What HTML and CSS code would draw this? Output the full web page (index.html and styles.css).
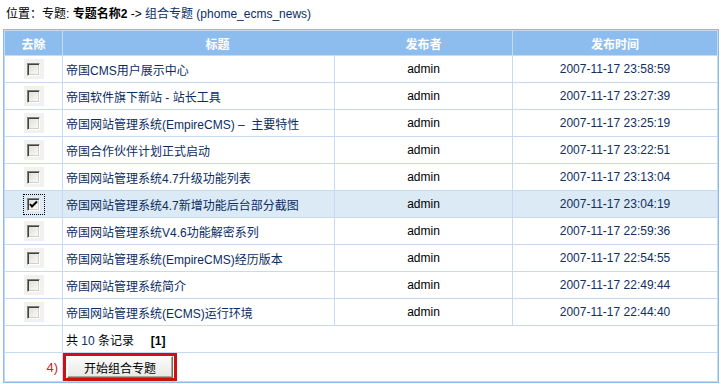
FILE: index.html
```html
<!DOCTYPE html>
<html lang="zh-CN">
<head>
    <meta charset="UTF-8">
    <title>组合专题</title>
    <link rel="stylesheet" href="styles.css">
</head>
<body>

    <div class="position">
        位置：专题: <b>专题名称2</b> -&gt; <a href="#">组合专题 (phome_ecms_news)</a>
    </div>

    <table class="tableborder">
        <colgroup>
            <col class="col-del">
            <col class="col-title">
            <col class="col-user">
            <col class="col-time">
        </colgroup>
        <tr class="header">
            <th>去除</th>
            <th class="th-title">标题</th>
            <th>发布者</th>
            <th>发布时间</th>
        </tr>
        <tr>
            <td class="del"><span class="cb-wrap"><span class="cb"></span></span></td>
            <td><a href="#">帝国CMS用户展示中心</a></td>
            <td class="user">admin</td>
            <td class="time">2007-11-17 23:58:59</td>
        </tr>
        <tr>
            <td class="del"><span class="cb-wrap"><span class="cb"></span></span></td>
            <td><a href="#">帝国软件旗下新站 - 站长工具</a></td>
            <td class="user">admin</td>
            <td class="time">2007-11-17 23:27:39</td>
        </tr>
        <tr>
            <td class="del"><span class="cb-wrap"><span class="cb"></span></span></td>
            <td><a href="#">帝国网站管理系统(EmpireCMS) – &nbsp;主要特性</a></td>
            <td class="user">admin</td>
            <td class="time">2007-11-17 23:25:19</td>
        </tr>
        <tr>
            <td class="del"><span class="cb-wrap"><span class="cb"></span></span></td>
            <td><a href="#">帝国合作伙伴计划正式启动</a></td>
            <td class="user">admin</td>
            <td class="time">2007-11-17 23:22:51</td>
        </tr>
        <tr>
            <td class="del"><span class="cb-wrap"><span class="cb"></span></span></td>
            <td><a href="#">帝国网站管理系统4.7升级功能列表</a></td>
            <td class="user">admin</td>
            <td class="time">2007-11-17 23:13:04</td>
        </tr>
        <tr class="selected">
            <td class="del">
                <span class="cb-wrap focus">
                    <span class="cb">
                        <svg width="11" height="11" viewBox="0 0 11 11"><path d="M2 5 L4 7.5 L9 2.5" fill="none" stroke="#000" stroke-width="2"/></svg>
                    </span>
                </span>
            </td>
            <td><a href="#">帝国网站管理系统4.7新增功能后台部分截图</a></td>
            <td class="user">admin</td>
            <td class="time">2007-11-17 23:04:19</td>
        </tr>
        <tr>
            <td class="del"><span class="cb-wrap"><span class="cb"></span></span></td>
            <td><a href="#">帝国网站管理系统V4.6功能解密系列</a></td>
            <td class="user">admin</td>
            <td class="time">2007-11-17 22:59:36</td>
        </tr>
        <tr>
            <td class="del"><span class="cb-wrap"><span class="cb"></span></span></td>
            <td><a href="#">帝国网站管理系统(EmpireCMS)经历版本</a></td>
            <td class="user">admin</td>
            <td class="time">2007-11-17 22:54:55</td>
        </tr>
        <tr>
            <td class="del"><span class="cb-wrap"><span class="cb"></span></span></td>
            <td><a href="#">帝国网站管理系统简介</a></td>
            <td class="user">admin</td>
            <td class="time">2007-11-17 22:49:44</td>
        </tr>
        <tr>
            <td class="del"><span class="cb-wrap"><span class="cb"></span></span></td>
            <td><a href="#">帝国网站管理系统(ECMS)运行环境</a></td>
            <td class="user">admin</td>
            <td class="time">2007-11-17 22:44:40</td>
        </tr>
        <tr>
            <td></td>
            <td colspan="3">共 <span class="num">10</span> 条记录 &nbsp;&nbsp;&nbsp;&nbsp;<b>[1]</b></td>
        </tr>
        <tr class="submit-row">
            <td class="step">4)</td>
            <td colspan="3"><span class="mark"><button class="btn" type="button">开始组合专题</button></span></td>
        </tr>
    </table>

</body>
</html>
```

FILE: styles.css
```css
/* Base */
body {
    margin: 0;
    padding: 0 2px 0 3px;
    background: #fff;
    color: #000;
    font-family: "Liberation Sans", "Noto Sans CJK SC", sans-serif;
    font-size: 12px;
}

a {
    color: #0b2d63;
    text-decoration: none;
}

.position {
    height: 29px;
    box-sizing: border-box;
    padding: 6px 0 0 3px;
    line-height: 16px;
}

/* Table */
.tableborder {
    width: 100%;
    border: 1px solid #8cbbea;
    border-collapse: separate;
    border-spacing: 1px;
    background-color: #c6dbf2;
    table-layout: fixed;
}

.col-del { width: 57px; }
.col-title { width: 271px; }
.col-user { width: 177px; }
.col-time { width: auto; }

.tableborder td {
    background-color: #fff;
    height: 26px;
    padding: 0 3px;
    vertical-align: middle;
    white-space: nowrap;
}

.header th {
    background-color: #8dbdee;
    color: #fff;
    font-weight: bold;
    height: 24px;
    padding: 0;
    text-align: center;
}

/* no divider between title and user in the header */
.header .th-title {
    padding-left: 38px;
    box-shadow: 1px 0 0 #8dbdee;
}

.tableborder .selected td {
    background-color: #dbeaf5;
}

.del {
    text-align: center;
}

.user {
    text-align: center;
}

.time {
    text-align: center;
    color: #10305f;
}

.num {
    color: #10305f;
}

/* Checkbox */
.cb-wrap {
    display: inline-flex;
    align-items: center;
    justify-content: center;
    width: 20px;
    height: 20px;
    background-color: #f1f1ef;
    vertical-align: middle;
    box-sizing: border-box;
}

.cb-wrap.focus {
    background: transparent;
    border: 1px dotted #000;
    width: 22px;
    height: 21px;
}

.cb {
    display: inline-flex;
    align-items: center;
    justify-content: center;
    width: 13px;
    height: 13px;
    box-sizing: border-box;
    border: 1px solid;
    border-color: #808080 #fff #fff #808080;
    box-shadow: inset 1px 1px 0 #404040, inset -1px -1px 0 #d4d0c8;
    background: linear-gradient(135deg, #dcdbd4, #fdfdfb);
}

.cb svg {
    display: block;
}

/* Submit row */
.tableborder .submit-row td {
    height: 28px;
    padding: 0;
}

.tableborder .submit-row .step {
    text-align: right;
    color: #cc1f1f;
    font-size: 13px;
    padding-right: 4px;
}

.mark {
    display: inline-block;
    vertical-align: top;
    border: 3px solid #cc1111;
    padding: 0 1px;
}

.btn {
    display: block;
    width: 106px;
    height: 22px;
    margin: 0;
    padding: 0;
    font-family: "Liberation Sans", "Noto Sans CJK SC", sans-serif;
    font-size: 12px;
    color: #000;
    background: linear-gradient(#fbfbfb, #e8e8e4);
    border: 1px solid;
    border-color: #fff #716f64 #716f64 #fff;
    box-shadow: inset -1px -1px 0 #aca899;
}
```
